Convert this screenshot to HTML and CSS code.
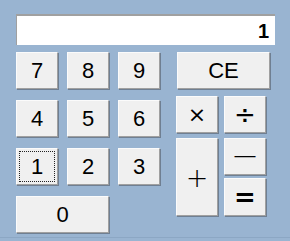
FILE: index.html
```html
<!DOCTYPE html>
<html lang="ja">
<head>
  <meta charset="UTF-8">
  <title>Calculator</title>
  <link rel="stylesheet" href="styles.css">
</head>
<body>
  <div class="calc">
    <div class="display">1</div>
    <div class="keys">
      <div class="digits">
        <button class="key">7</button>
        <button class="key">8</button>
        <button class="key">9</button>
        <button class="key">4</button>
        <button class="key">5</button>
        <button class="key">6</button>
        <button class="key focus">1</button>
        <button class="key">2</button>
        <button class="key">3</button>
        <button class="key zero">0</button>
      </div>
      <div class="ops">
        <button class="key ce">CE</button>
        <button class="key op mul">×</button>
        <button class="key op div">÷</button>
        <button class="key op plus">+</button>
        <button class="key op minus">—</button>
        <button class="key op eq">=</button>
      </div>
    </div>
  </div>
</body>
</html>
```

FILE: styles.css
```css
body {
  margin: 0;
  padding: 0;
  background-color: #99b4d1;
  font-family: "Liberation Sans", Arial, sans-serif;
}
.calc {
  width: 290px;
  height: 238px;
  box-sizing: border-box;
  padding: 14px 0 0 16px;
  border-bottom: 1px solid #8ca7c4;
}
.display {
  width: 259px;
  height: 31px;
  box-sizing: border-box;
  background: #ffffff;
  border-top: 2px solid #a0a0a0;
  border-left: 1px solid #a0a0a0;
  padding-right: 6px;
  text-align: right;
  font-size: 20px;
  font-weight: bold;
  line-height: 30px;
  color: #000;
}
.keys {
  display: flex;
  margin-top: 7px;
  gap: 16px;
}
.digits {
  display: grid;
  grid-template-columns: 42px 42px 42px;
  grid-template-rows: 37px 37px 37px 37px;
  column-gap: 9px;
  row-gap: 11px;
}
.ops {
  display: grid;
  grid-template-columns: 42px 42px;
  grid-template-rows: 37px 7px 37px 5px 37px 3px 38px;
  column-gap: 6px;
}
.key {
  margin: 0;
  padding: 0;
  background: #f0f0f0;
  border: none;
  border-top: 1px solid #fbfbfb;
  border-left: 1px solid #fbfbfb;
  border-right: 1px solid #a0a0a0;
  border-bottom: 1px solid #a0a0a0;
  box-shadow: 1px 1px 0 #6f7f92;
  font-family: "Liberation Sans", Arial, sans-serif;
  font-size: 22px;
  color: #000;
}
.focus {
  outline: 1px dotted #222;
  outline-offset: -4px;
}
.zero {
  grid-column: 1 / 3;
}
.ce {
  grid-column: 1 / 3;
  grid-row: 1;
  width: 93px;
  margin-left: 1px;
}
.op {
  font-family: "DejaVu Sans", sans-serif;
}
.mul {
  grid-column: 1;
  grid-row: 3;
  font-size: 22px;
}
.div {
  grid-column: 2;
  grid-row: 3;
  font-size: 26px;
}
.plus {
  grid-column: 1;
  grid-row: 5 / 8;
  font-size: 27px;
  font-weight: 200;
}
.minus {
  grid-column: 2;
  grid-row: 5;
  font-family: "Liberation Sans", Arial, sans-serif;
  font-size: 21px;
  padding-bottom: 4px;
}
.eq {
  grid-column: 2;
  grid-row: 7;
  font-size: 26px;
  font-weight: bold;
}
```
